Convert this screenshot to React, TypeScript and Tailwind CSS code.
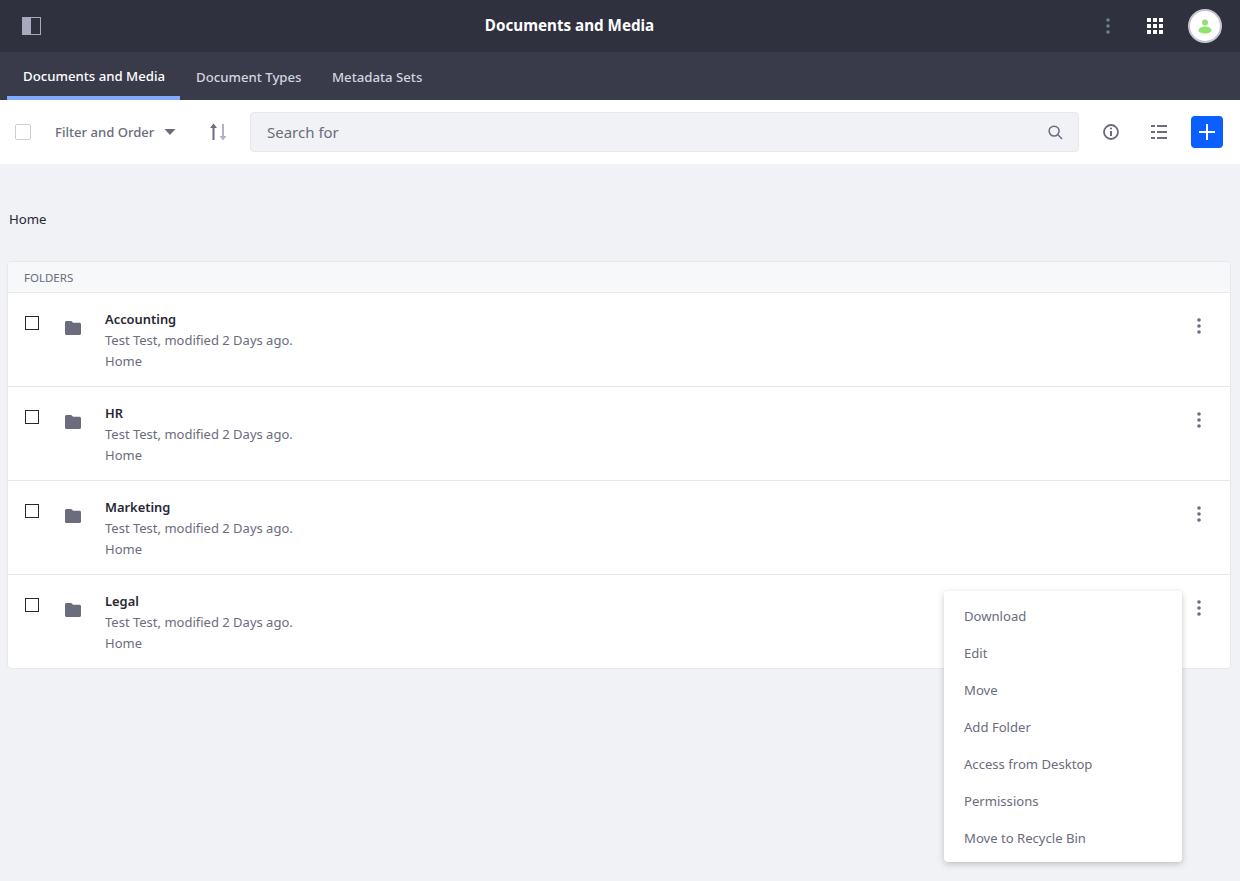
const F = "Noto Sans";
const rows = ["Accounting", "HR", "Marketing", "Legal"];
const menu = ["Download", "Edit", "Move", "Add Folder", "Access from Desktop", "Permissions", "Move to Recycle Bin"];

function Kebab({ color = "#6b6c7e" }: { color?: string }) {
  return (
    <svg width="4" height="16" viewBox="0 0 4 16" fill={color}>
      <circle cx="2" cy="2" r="1.8" />
      <circle cx="2" cy="8" r="1.8" />
      <circle cx="2" cy="14" r="1.8" />
    </svg>
  );
}

function Folder() {
  return (
    <svg width="16" height="14" viewBox="0 0 16 14" fill="#6b6c7e">
      <path d="M1.5 0h4.3c.5 0 .9.2 1.2.6l1 1.2h6.5c.8 0 1.5.7 1.5 1.5v9.2c0 .8-.7 1.5-1.5 1.5h-13C.7 14 0 13.300 0 12.500v-11C0 .7.700 0 1.500 0z" />
    </svg>
  );
}

export default function App() {
  return (
    <div className="min-h-[881px] bg-[#f1f2f5] relative" style={{ fontFamily: `"${F}", sans-serif` }}>
      <header className="h-[52px] bg-[#30313f] flex items-center justify-between pl-[22px] pr-[18px] relative">
        <svg width="19" height="18" viewBox="0 0 19 18">
          <rect x="0" y="0" width="9" height="18" fill="#a7a9bc" />
          <rect x="0.5" y="0.5" width="18" height="17" fill="none" stroke="#a7a9bc" />
        </svg>
        <div className="absolute left-0 right-[101px] top-[13px] text-center text-white font-bold text-[15.2px] leading-[24px]">Documents and Media</div>
        <div className="flex items-center">
          <Kebab color="#6b8191" />
          <svg className="ml-[37px]" width="16" height="16" viewBox="0 0 16 16" fill="#fff">
            {[0, 6, 12].flatMap((y) => [0, 6, 12].map((x) => <rect key={`${x}-${y}`} x={x} y={y} width="4" height="4" />))}
          </svg>
          <div className="ml-[25px] w-[34px] h-[34px] rounded-full bg-white border-2 border-[#c4c5cf] flex items-center justify-center">
            <svg width="14" height="15" viewBox="0 0 14 15" fill="#94e070">
              <circle cx="7" cy="3.400" r="3" />
              <path d="M0.500 11.500c0-2.400 2.800-4 6.500-4s6.500 1.600 6.500 4c0 1.600-2.800 3-6.500 3s-6.500-1.400-6.500-3z" />
            </svg>
          </div>
        </div>
      </header>

      <nav className="h-[48px] bg-[#393a4a] flex pl-[7px] text-[13.2px] font-medium whitespace-nowrap">
        <div className="h-full px-4 flex items-center text-white border-b-4 border-[#80acff] pt-[6px] w-[173px]">Documents and Media</div>
        <div className="h-full pl-4 w-[136px] flex items-center text-[#d3d4de] pt-[4px]">Document Types</div>
        <div className="h-full px-4 flex items-center text-[#d3d4de] pt-[4px]">Metadata Sets</div>
      </nav>

      <div className="h-[64px] bg-white flex items-center pl-[15px] pr-[17px]">
        <div className="w-4 h-4 border border-[#cdced9] rounded-[2px] bg-white" />
        <div className="ml-[24px] pt-[1px] text-[13.1px] font-medium text-[#6b6c7e] w-[100px] whitespace-nowrap">Filter and Order</div>
        <svg className="ml-[9px]" width="12" height="6" viewBox="0 0 12 6" fill="#6b6c7e"><path d="M0.500 0h11L6 6z" /></svg>
        <svg className="ml-[33px]" width="18" height="18" viewBox="0 0 18 18">
          <path d="M3.500 17V5H1L4.500 0.500 8 5H5.500v12z" fill="#6b6c7e" />
          <path d="M13 1v12h-2.500l3.500 4.500 3.500-4.500H15V1z" fill="#b1b2c3" />
        </svg>
        <div className="ml-[23px] flex-1 h-[40px] bg-[#f1f2f5] border border-[#e7e7ed] rounded-[4px] flex items-center justify-between pl-4 pr-[15px]">
          <span className="text-[15px] text-[#6b6c7e]">Search for</span>
          <svg width="15" height="15" viewBox="0 0 16 16" fill="none" stroke="#6b6c7e" strokeWidth="1.600">
            <circle cx="6.500" cy="6.500" r="5.300" />
            <path d="M10.500 10.500l4.500 4.500" />
          </svg>
        </div>
        <svg className="ml-[24px]" width="16" height="16" viewBox="0 0 16 16" fill="none">
          <circle cx="8" cy="8" r="7" stroke="#6b6c7e" strokeWidth="1.800" />
          <path d="M8 7v5" stroke="#6b6c7e" strokeWidth="2" />
          <circle cx="8" cy="4.500" r="1.100" fill="#6b6c7e" />
        </svg>
        <svg className="ml-[32px]" width="16" height="16" viewBox="0 0 16 16" fill="#6b6c7e">
          <rect x="0" y="1" width="4" height="2" /><rect x="6" y="1" width="10" height="2" />
          <rect x="0" y="7" width="4" height="2" /><rect x="6" y="7" width="10" height="2" />
          <rect x="0" y="13" width="4" height="2" /><rect x="6" y="13" width="10" height="2" />
        </svg>
        <button className="ml-[24px] w-8 h-8 rounded-[4px] bg-[#0b5fff] flex items-center justify-center">
          <svg width="16" height="16" viewBox="0 0 16 16" fill="#fff"><path d="M7 0h2v7h7v2H9v7H7V9H0V7h7z" /></svg>
        </button>
      </div>

      <div className="pt-[45px] pl-[9px] text-[13.2px] leading-[20px] text-[#272833]">Home</div>

      <section className="mt-[32px] mx-[7px] w-[1224px] bg-white border border-[#e7e7ed] rounded-[4px] overflow-hidden">
        <div className="h-[29px] bg-[#f7f8f9] border-b border-[#e7e7ed] box-content pl-4 pt-[1px] flex items-center text-[11.5px] text-[#6b6c7e] uppercase">Folders</div>
        {rows.map((r, i) => (
          <div key={r} className={`flex pl-[17px] pr-[29px] ${i < 3 ? "h-[94px] border-b border-[#e7e7ed]" : "h-[93px]"}`}>
            <div className="mt-[23px] w-[14px] h-[14px] border-[1.500px] border-[#272833] bg-white shrink-0" />
            <div className="mt-[28px] ml-[26px] shrink-0"><Folder /></div>
            <div className="ml-[24px] pt-[16px] flex-1 leading-[21px] text-[13px]">
              <div className="font-semibold text-[#272833] text-[12.9px]">{r}</div>
              <div className="text-[#6b6c7e]">Test Test, modified 2 Days ago.</div>
              <div className="text-[#6b6c7e]">Home</div>
            </div>
            <div className="mt-[25px]"><Kebab /></div>
          </div>
        ))}
      </section>

      <div className="absolute left-[944px] top-[591px] w-[238px] h-[271px] bg-white rounded-[4px] shadow-[0_2px_6px_rgba(39,40,51,0.25)] pt-[7px]">
        {menu.map((m) => (
          <div key={m} className="h-[37px] pl-[20px] flex items-center text-[13.1px] text-[#6b6c7e]">{m}</div>
        ))}
      </div>
    </div>
  );
}
